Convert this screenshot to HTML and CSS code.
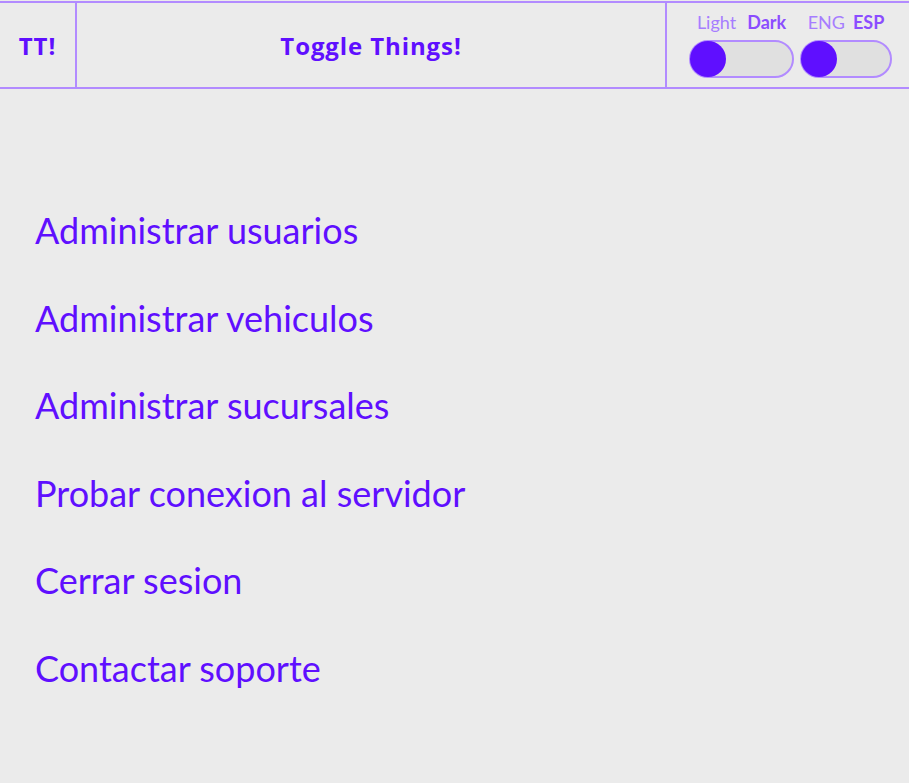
FILE: index.html
```html
<!DOCTYPE html>
<html lang="es">
<head>
<meta charset="utf-8">
<title>Toggle Things!</title>
<link rel="stylesheet" href="styles.css">
</head>
<body>
<header class="topbar">
  <div class="brand">TT!</div>
  <div class="title">Toggle Things!</div>
  <div class="toggles">
    <div class="toggle-group theme">
      <div class="labels"><span class="off">Light</span><span class="on">Dark</span></div>
      <div class="switch"><span class="knob"></span></div>
    </div>
    <div class="toggle-group lang">
      <div class="labels"><span class="off">ENG</span><span class="on">ESP</span></div>
      <div class="switch"><span class="knob"></span></div>
    </div>
  </div>
</header>
<nav class="menu">
  <a class="item">Administrar usuarios</a>
  <a class="item">Administrar vehiculos</a>
  <a class="item">Administrar sucursales</a>
  <a class="item">Probar conexion al servidor</a>
  <a class="item">Cerrar sesion</a>
  <a class="item">Contactar soporte</a>
</nav>
</body>
</html>
```
FILE: styles.css
```css
html, body {
  margin: 0;
  padding: 0;
  background: #ebebeb;
  font-family: "Lato", "Open Sans", sans-serif;
  color: #5f0fff;
}
.topbar {
  display: flex;
  margin-top: 1px;
  height: 84px;
  border-top: 2px solid #b28bff;
  border-bottom: 2px solid #b28bff;
}
.brand {
  width: 75px;
  border-right: 2px solid #b28bff;
  display: flex;
  align-items: center;
  justify-content: center;
  font-family: "Open Sans", sans-serif;
  font-weight: 700;
  font-size: 24px;
  letter-spacing: 1px;
}
.title {
  flex: 1;
  border-right: 2px solid #b28bff;
  display: flex;
  align-items: center;
  justify-content: center;
  font-family: "Open Sans", sans-serif;
  font-weight: 700;
  font-size: 24px;
  letter-spacing: 0.9px;
}
.toggles {
  padding: 0 17px 0 22px;
  display: flex;
  gap: 6px;
  width: 203px;
}
.toggle-group {
  display: flex;
  flex-direction: column;
  align-items: center;
}
.theme { width: 105px; }
.lang { width: 92px; }
.labels {
  height: 37px;
  display: flex;
  align-items: center;
  gap: 11px;
  font-size: 18px;
  color: #a67dff;
}
.lang .labels { gap: 8px; }
.labels .on { font-weight: 700; color: #8b4dff; }
.switch {
  width: 100%;
  height: 38px;
  box-sizing: border-box;
  border: 2px solid #b28bff;
  border-radius: 19px;
  background: #e0e0e0;
  display: flex;
  align-items: center;
}
.knob {
  width: 36px;
  height: 36px;
  border-radius: 50%;
  background: #5f0fff;
  margin-left: -1px;
}
.menu {
  display: flex;
  flex-direction: column;
  padding: 98px 0 0 35px;
}
.item {
  font-size: 36px;
  line-height: 87.5px;
  height: 87.5px;
  color: #5f0fff;
}
```
